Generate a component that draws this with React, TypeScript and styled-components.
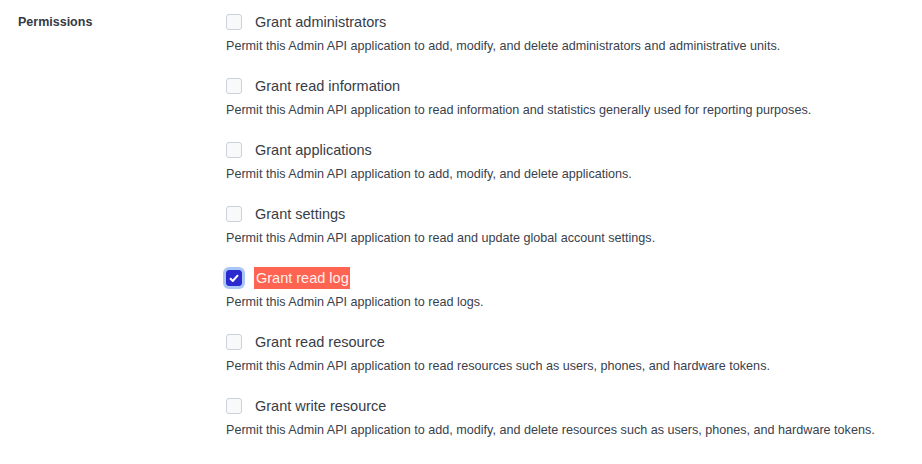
import React from "react";
import styled, { createGlobalStyle } from "styled-components";

const Global = createGlobalStyle`
  html, body { margin: 0; padding: 0; background: #fff; }
  body { font-family: "Liberation Sans", Arial, sans-serif; color: #333; }
`;

const Page = styled.div`
  display: grid;
  grid-template-columns: 226px 1fr;
  padding: 11px 0 0 0;
`;

const SectionLabel = styled.div`
  padding-left: 18px;
  font-size: 12.5px;
  font-weight: bold;
  color: #343a43;
  line-height: 22px;
`;

const List = styled.div`
  display: flex;
  flex-direction: column;
`;

const Item = styled.div`
  display: flex;
  flex-direction: column;
  margin-bottom: 20px;
`;

const Row = styled.label`
  display: flex;
  align-items: center;
  height: 22px;
  gap: 12px;
`;

const Box = styled.span<{ $checked?: boolean }>`
  box-sizing: border-box;
  width: 16px;
  height: 16px;
  border-radius: 3px;
  display: inline-flex;
  align-items: center;
  justify-content: center;
  flex: none;
  border: 1px solid ${(p) => (p.$checked ? "#2a2ad0" : "#c9d1dc")};
  background: ${(p) => (p.$checked ? "#2a2ad0" : "#f7f9fb")};
  box-shadow: ${(p) => (p.$checked ? "0 0 0 3px #a9c6f5" : "none")};
`;

const LabelText = styled.span<{ $hl?: boolean }>`
  font-size: 14.5px;
  line-height: 22px;
  color: ${(p) => (p.$hl ? "#fff0ee" : "#363d47")};
  background: ${(p) => (p.$hl ? "#ff6452" : "transparent")};
  padding: ${(p) => (p.$hl ? "0 1px 0 2px" : "0 0 0 1px")};
`;

const Desc = styled.div`
  font-size: 12.6px;
  line-height: 18px;
  margin-top: 4px;
  color: #39414d;
`;

const items = [
  ["Grant administrators", "Permit this Admin API application to add, modify, and delete administrators and administrative units."],
  ["Grant read information", "Permit this Admin API application to read information and statistics generally used for reporting purposes."],
  ["Grant applications", "Permit this Admin API application to add, modify, and delete applications."],
  ["Grant settings", "Permit this Admin API application to read and update global account settings."],
  ["Grant read log", "Permit this Admin API application to read logs."],
  ["Grant read resource", "Permit this Admin API application to read resources such as users, phones, and hardware tokens."],
  ["Grant write resource", "Permit this Admin API application to add, modify, and delete resources such as users, phones, and hardware tokens."],
];

export default function App() {
  return (
    <>
      <Global />
      <Page>
        <SectionLabel>Permissions</SectionLabel>
        <List>
          {items.map(([t, d], i) => {
            const checked = i === 4;
            return (
              <Item key={t}>
                <Row>
                  <Box $checked={checked}>
                    {checked && (
                      <svg width="10" height="8" viewBox="0 0 10 8">
                        <path d="M1 4.2 L3.8 7 L9 1.2" fill="none" stroke="#fff" strokeWidth="2" />
                      </svg>
                    )}
                  </Box>
                  <LabelText $hl={checked}>{t}</LabelText>
                </Row>
                <Desc>{d}</Desc>
              </Item>
            );
          })}
        </List>
      </Page>
    </>
  );
}
